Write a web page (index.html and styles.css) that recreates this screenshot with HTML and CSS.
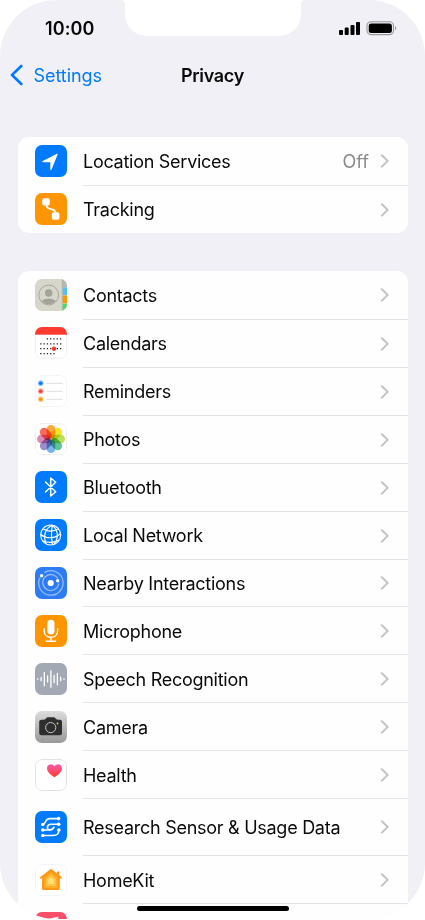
FILE: index.html
```html
<!DOCTYPE html>
<html lang="en">

<head>
    <meta charset="UTF-8">
    <meta name="viewport" content="width=device-width, initial-scale=1.0">
    <title>Privacy</title>
    <link rel="stylesheet" href="styles.css">
</head>

<body>
    <svg class="symbols" width="0" height="0">
        <symbol id="chevron" viewBox="0 0 10 14">
            <path d="M1.900 1.200 L7.700 6.900 L1.900 12.600" fill="none" stroke="#c3c3c6" stroke-width="2" stroke-linecap="round" stroke-linejoin="round"/>
        </symbol>
    </svg>

    <div class="phone">
        <svg class="notch" viewBox="0 0 186 37">
            <path d="M0 0 H186 C182 0 181 1.500 181 5 V12 C181 27 172 36 157 36 H29 C14 36 5 27 5 12 V5 C5 1.500 4 0 0 0Z" fill="#fff"/>
        </svg>

        <div class="status-bar">
            <span class="time">10:00</span>
            <svg class="status-icons" width="60" height="16" viewBox="0 0 60 16">
                <rect x="1" y="10" width="4" height="5" rx="1"/>
                <rect x="6.700" y="7.600" width="4" height="7.400" rx="1"/>
                <rect x="12.500" y="5" width="4" height="10" rx="1"/>
                <rect x="18" y="2" width="4" height="13" rx="1"/>
                <rect x="29" y="1.800" width="26.500" height="12.800" rx="4" fill="none" stroke="#98979b" stroke-width="1.100"/>
                <rect x="30.700" y="3.400" width="23.200" height="9.600" rx="2.500"/>
                <path d="M57 6.300 C58.700 7 58.700 9.600 57 10.300Z" fill="#98979b"/>
            </svg>
        </div>

        <div class="nav-bar">
            <a class="back">
                <svg width="14" height="22" viewBox="0 0 14 22">
                    <path d="M12.300 2 L3 11 L12.300 20" fill="none" stroke="#007aff" stroke-width="2.600" stroke-linecap="round" stroke-linejoin="round"/>
                </svg>
                <span>Settings</span>
            </a>
            <h1>Privacy</h1>
        </div>

        <div class="group">
            <div class="row">
                <svg class="icon blue" viewBox="0 0 32 32">
                    <path d="M22.800 9 L16.600 24.500 Q15.700 25.800 15.300 24.200 V17.300 H8 Q6.300 16.900 7.700 15.900 L22 8.800 Q22.900 8.400 22.800 9Z" fill="#fff"/>
                </svg>
                <div class="content"><span class="label">Location Services</span><span class="value">Off</span><svg class="chevron"><use href="#chevron"/></svg></div>
            </div>
            <div class="row">
                <svg class="icon orange" viewBox="0 0 32 32">
                    <path d="M11.500 11 V12.500 C11.500 18.500 20.500 13.500 20.500 20" fill="none" stroke="#fff" stroke-width="1.700"/>
                    <rect x="7.200" y="5.200" width="7.600" height="7.400" rx="1.800" fill="#fff"/>
                    <rect x="16.800" y="19.200" width="7.600" height="7.600" rx="1.800" fill="#fff"/>
                </svg>
                <div class="content"><span class="label">Tracking</span><svg class="chevron"><use href="#chevron"/></svg></div>
            </div>
        </div>

        <div class="group">
            <div class="row">
                <svg class="icon contacts" viewBox="0 0 32 32">
                    <clipPath id="face"><circle cx="13.700" cy="16" r="9.300"/></clipPath>
                    <rect x="27" width="5" height="8" fill="#b9b8af"/>
                    <rect x="27.500" y="8.300" width="4.500" height="7.700" fill="#55bef5"/>
                    <rect x="27.500" y="16.500" width="4.500" height="7.700" fill="#ff9500"/>
                    <rect x="27.500" y="24.700" width="4.500" height="7.300" fill="#4cd964"/>
                    <path d="M27.200 0 V32" stroke="#aeada4" stroke-width=".6"/>
                    <g clip-path="url(#face)" fill="#a3a198">
                        <circle cx="13.700" cy="14" r="3.700"/>
                        <ellipse cx="13.700" cy="24.700" rx="8.500" ry="5"/>
                    </g>
                    <circle cx="13.700" cy="16" r="9.900" fill="none" stroke="#a3a198" stroke-width=".9"/>
                </svg>
                <div class="content"><span class="label">Contacts</span><svg class="chevron"><use href="#chevron"/></svg></div>
            </div>
            <div class="row">
                <svg class="icon" viewBox="0 0 32 32">
                    <rect x=".5" y=".5" width="31" height="31" rx="6.500" fill="#fff" stroke="#f0f0f2"/>
                    <rect width="32" height="7.700" fill="#ff3b30"/>
                    <g fill="none" stroke="#222" stroke-width="1.300" stroke-dasharray="1.300 2">
                        <path d="M11.700 11.800 H26.400"/>
                        <path d="M5.200 16.800 H26.400"/>
                        <path d="M5.200 21.700 H26.400"/>
                        <path d="M5.200 26.700 H20"/>
                    </g>
                    <circle cx="19" cy="21.800" r="2.200" fill="#ff3b30"/>
                </svg>
                <div class="content"><span class="label">Calendars</span><svg class="chevron"><use href="#chevron"/></svg></div>
            </div>
            <div class="row">
                <svg class="icon" viewBox="0 0 32 32">
                    <rect x=".5" y=".5" width="31" height="31" rx="6.500" fill="#fff" stroke="#f4f4f5"/>
                    <path d="M11.500 8.300 H27.700 M11.500 16.300 H27.700 M11.500 24.300 H27.700" stroke="#dedee0" stroke-width="1"/>
                    <g fill="#007aff"><circle cx="5.700" cy="8.200" r="2.900" opacity=".4"/><circle cx="5.700" cy="8.200" r="1.800"/></g>
                    <g fill="#ff3b30"><circle cx="5.700" cy="16.200" r="2.900" opacity=".4"/><circle cx="5.700" cy="16.200" r="1.800"/></g>
                    <g fill="#ff9500"><circle cx="5.700" cy="24.200" r="2.900" opacity=".4"/><circle cx="5.700" cy="24.200" r="1.800"/></g>
                </svg>
                <div class="content"><span class="label">Reminders</span><svg class="chevron"><use href="#chevron"/></svg></div>
            </div>
            <div class="row">
                <svg class="icon" viewBox="0 0 32 32">
                    <rect x=".5" y=".5" width="31" height="31" rx="6.500" fill="#fff" stroke="#f0f0f2"/>
                    <g class="petals">
                        <rect x="11.700" y="2" width="8.600" height="13.500" rx="4.300" fill="#fba73a"/>
                        <rect x="11.700" y="2" width="8.600" height="13.500" rx="4.300" fill="#f0e52c" transform="rotate(45 16 16)"/>
                        <rect x="11.700" y="2" width="8.600" height="13.500" rx="4.300" fill="#bade5c" transform="rotate(90 16 16)"/>
                        <rect x="11.700" y="2" width="8.600" height="13.500" rx="4.300" fill="#62c298" transform="rotate(135 16 16)"/>
                        <rect x="11.700" y="2" width="8.600" height="13.500" rx="4.300" fill="#76b6e8" transform="rotate(180 16 16)"/>
                        <rect x="11.700" y="2" width="8.600" height="13.500" rx="4.300" fill="#a08ccb" transform="rotate(225 16 16)"/>
                        <rect x="11.700" y="2" width="8.600" height="13.500" rx="4.300" fill="#dc8cb4" transform="rotate(270 16 16)"/>
                        <rect x="11.700" y="2" width="8.600" height="13.500" rx="4.300" fill="#f76b5c" transform="rotate(315 16 16)"/>
                    </g>
                </svg>
                <div class="content"><span class="label">Photos</span><svg class="chevron"><use href="#chevron"/></svg></div>
            </div>
            <div class="row">
                <svg class="icon blue" viewBox="0 0 32 32">
                    <path d="M10.500 11 L20.700 20.700 L15.700 25 V7 L20.700 11.300 L10.500 21" fill="none" stroke="#fff" stroke-width="1.500" stroke-linejoin="round" stroke-linecap="round"/>
                </svg>
                <div class="content"><span class="label">Bluetooth</span><svg class="chevron"><use href="#chevron"/></svg></div>
            </div>
            <div class="row">
                <svg class="icon blue" viewBox="0 0 32 32">
                    <g fill="none" stroke="#fff" stroke-width="1.150">
                        <circle cx="15.700" cy="16" r="10"/>
                        <path d="M17.500 6.200 C10 9 8 17 11 24.800 M17.500 6.200 C16 12 16.500 20 17.500 25.800 M17.500 6.200 C24 12 23.500 20 18.500 25.800"/>
                        <path d="M8 9.800 C13 13 19 12.500 23.500 9.800 M5.800 15.500 C11 20 20 20 25.600 14.500 M7.500 21.700 C12 24 20 24 24 21"/>
                    </g>
                </svg>
                <div class="content"><span class="label">Local Network</span><svg class="chevron"><use href="#chevron"/></svg></div>
            </div>
            <div class="row">
                <svg class="icon nearby" viewBox="0 0 32 32">
                    <g fill="none" stroke="#93bdfb" stroke-width="1.300">
                        <path d="M9.500 5.600 A12.200 12.200 0 1 1 5 10.500"/>
                        <path d="M22.800 11.700 A8 8 0 1 0 23.700 16.500"/>
                    </g>
                    <g fill="#fff">
                        <circle cx="15.700" cy="16" r="3.100"/>
                        <circle cx="6.600" cy="8.700" r="1.700"/>
                        <circle cx="22.700" cy="13.700" r="1.700"/>
                    </g>
                </svg>
                <div class="content"><span class="label">Nearby Interactions</span><svg class="chevron"><use href="#chevron"/></svg></div>
            </div>
            <div class="row">
                <svg class="icon orange" viewBox="0 0 32 32">
                    <rect x="12.300" y="4.800" width="7.200" height="14.600" rx="3.600" fill="#fff"/>
                    <path d="M9.200 13.700 V16 C9.200 24.300 22.600 24.300 22.600 16 V13.700 M15.900 22.300 V26.200 M11.200 26.300 H20.600" fill="none" stroke="#fff" stroke-width="1.400" stroke-linecap="round"/>
                </svg>
                <div class="content"><span class="label">Microphone</span><svg class="chevron"><use href="#chevron"/></svg></div>
            </div>
            <div class="row">
                <svg class="icon speech" viewBox="0 0 32 32">
                    <path d="M2.800 15.700 V16.300 M6.100 14.500 V17.700 M9.300 9.500 V22.700 M12.600 13 V19 M15.900 8 V24.300 M19.100 12.500 V19.700 M22.400 10.300 V21.800 M25.700 14.200 V17.800 M29 15.700 V16.300" stroke="#fff" stroke-width="1.300" stroke-linecap="round"/>
                </svg>
                <div class="content"><span class="label">Speech Recognition</span><svg class="chevron"><use href="#chevron"/></svg></div>
            </div>
            <div class="row">
                <svg class="icon camera" viewBox="0 0 32 32">
                    <path d="M6.300 8.700 Q10.300 9 11 7.500 Q11.700 6.200 13 6.200 H18.500 Q19.900 6.200 20.600 7.500 Q21.400 9 25 8.700 Q27 8.900 27 10.800 V22.300 Q27 24.300 25 24.300 H6.300 Q4.200 24.300 4.200 22.300 V10.800 Q4.200 8.800 6.300 8.700Z" fill="#2e2e2e"/>
                    <circle cx="15.700" cy="16.600" r="5.100" fill="none" stroke="#c6c6c6" stroke-width="1"/>
                    <circle cx="22.500" cy="12.500" r=".9" fill="#e8d52c"/>
                </svg>
                <div class="content"><span class="label">Camera</span><svg class="chevron"><use href="#chevron"/></svg></div>
            </div>
            <div class="row">
                <svg class="icon" viewBox="0 0 32 32">
                    <linearGradient id="heart" x1="0" y1="0" x2="0" y2="1"><stop offset="0" stop-color="#fc5cae"/><stop offset="1" stop-color="#ff3b2b"/></linearGradient>
                    <rect x=".5" y=".5" width="31" height="31" rx="6.500" fill="#fff" stroke="#e2e2e4"/>
                    <path d="M19.500 18.300 C15.500 15.500 12 13 12 9.200 C12 4.700 17.500 3.800 19.500 7.200 C21.500 3.800 27 4.700 27 9.200 C27 13 23.500 15.500 19.500 18.300Z" fill="url(#heart)"/>
                </svg>
                <div class="content"><span class="label">Health</span><svg class="chevron"><use href="#chevron"/></svg></div>
            </div>
            <div class="row tall">
                <svg class="icon blue" viewBox="0 0 32 32">
                    <g fill="none" stroke="#fff" stroke-width="1.600">
                        <path d="M23.500 7.600 H14.500 C9.500 7.600 11.500 13.500 7.500 13.500"/>
                        <path d="M23.700 13.200 H16 C11.500 13.200 11.300 19 15 18.900 C18.500 18.800 18 16.500 19.500 15.800"/>
                        <path d="M7.700 19 H15"/>
                        <path d="M7.700 24.500 H17.500 C22.500 24.500 23.800 23 23.800 19"/>
                    </g>
                    <g fill="#fff">
                        <circle cx="23.600" cy="7.600" r="1.800"/><circle cx="7.800" cy="13.500" r="1.800"/><circle cx="23.700" cy="13.200" r="1.800"/>
                        <circle cx="7.800" cy="19" r="1.800"/><circle cx="23.800" cy="19" r="1.800"/><circle cx="7.800" cy="24.500" r="1.800"/>
                    </g>
                </svg>
                <div class="content"><span class="label">Research Sensor &amp; Usage Data</span><svg class="chevron"><use href="#chevron"/></svg></div>
            </div>
            <div class="row">
                <svg class="icon" viewBox="0 0 32 32">
                    <rect x=".5" y=".5" width="31" height="31" rx="6.500" fill="#fff" stroke="#f4f4f5"/>
                    <path d="M4.500 13.700 L16 4.800 L22 9.400 V7.500 H24.300 V11.300 L27.300 13.700 L26.700 14.500 H24.800 V24.500 Q24.800 26 23.300 26 H8.500 Q7 26 7 24.500 V14.500 H5Z" fill="#ff9815"/>
                    <path d="M16 8.300 L22.700 13.500 V24 H9.300 V13.500Z" fill="#ffad27"/>
                    <path d="M16 10.800 L20.800 14.700 V22 H11.200 V14.700Z" fill="#ffc64c"/>
                    <path d="M16 13.500 L18.700 15.800 V20 H13.300 V15.800Z" fill="#ffe07b"/>
                </svg>
                <div class="content"><span class="label">HomeKit</span><svg class="chevron"><use href="#chevron"/></svg></div>
            </div>
            <div class="row">
                <svg class="icon music" viewBox="0 0 32 32">
                    <path d="M10 7.500 L23.300 4.700 V22 H21.500 V9 L11.800 11 V24 H10Z" fill="#fff"/>
                </svg>
                <div class="content"></div>
            </div>
        </div>
    </div>
    <div class="home-indicator"></div>
</body>

</html>
```
FILE: styles.css
```css
body {
    margin: 0;
    height: 920px;
    overflow: hidden;
    background-color: #fff;
    color: #0a0a0a;
    font-family: Inter, "Liberation Sans", sans-serif;
    font-size: 18px;
}

.symbols {
    position: absolute;
}

.phone {
    position: relative;
    box-sizing: border-box;
    height: 919px;
    overflow: hidden;
    border-radius: 56px;
    background-color: #f1f0f6;
}

.notch {
    position: absolute;
    top: 0;
    left: 119.5px;
    width: 186px;
    height: 37px;
}

.status-bar {
    display: flex;
    align-items: center;
    justify-content: space-between;
    height: 56px;
    padding: 0 27.5px 0 45px;
}

.time {
    font-weight: 600;
    font-size: 18px;
    letter-spacing: 0.1px;
}

.nav-bar {
    display: grid;
    grid-template-columns: 1fr auto 1fr;
    align-items: center;
    height: 38px;
    padding: 0 9px;
}

.nav-bar h1 {
    margin: 0;
    font-size: 18px;
    font-weight: 600;
    letter-spacing: -0.3px;
}

.back {
    display: flex;
    align-items: center;
    gap: 10.5px;
    color: #007aff;
    letter-spacing: -0.05px;
}

.group {
    margin: 43px 17.5px 38px;
    border-radius: 11px;
    background-color: #fefefe;
    overflow: hidden;
}

.group + .group {
    margin-top: 0;
}

.row {
    display: flex;
    align-items: center;
    gap: 16px;
    height: 48px;
    padding-left: 17.5px;
}

.icon {
    flex: none;
    width: 32px;
    height: 32px;
    border-radius: 7px;
    overflow: hidden;
}

.icon.blue {
    background-color: #007aff;
}

.icon.orange {
    background-color: #ff9500;
}

.icon.contacts {
    background-color: #d6d6cb;
}

.icon.nearby {
    background-color: #2d7cf6;
}

.icon.speech {
    background-color: #a2a8b4;
}

.icon.camera {
    background: linear-gradient(#dcdcdc, #999);
}

.icon.music {
    background-color: #fa4f68;
}

.petals rect {
    mix-blend-mode: multiply;
}

.content {
    display: flex;
    flex: 1;
    align-items: center;
    box-sizing: border-box;
    height: 100%;
    padding-right: 17.5px;
}

.row + .row .content {
    border-top: 1px solid #e4e4e6;
}

.row:nth-child(n+7) .content {
    border-bottom: 1px solid #e4e4e6;
}

.row:nth-child(n+8) .content {
    padding-top: 1px;
    border-top: none;
}

.row.tall {
    height: 57px;
}

.row.tall .icon {
    margin-bottom: 1px;
}

.row.tall .content {
    padding-top: 0;
}

.label {
    flex: 1;
    letter-spacing: -0.27px;
}

.value {
    margin-right: 11px;
    color: #8b8b8e;
}

.chevron {
    width: 10px;
    height: 14px;
}

.home-indicator {
    position: absolute;
    top: 905.5px;
    left: 137px;
    width: 151.5px;
    height: 5.5px;
    border-radius: 3px;
    background-color: #000;
}
```
